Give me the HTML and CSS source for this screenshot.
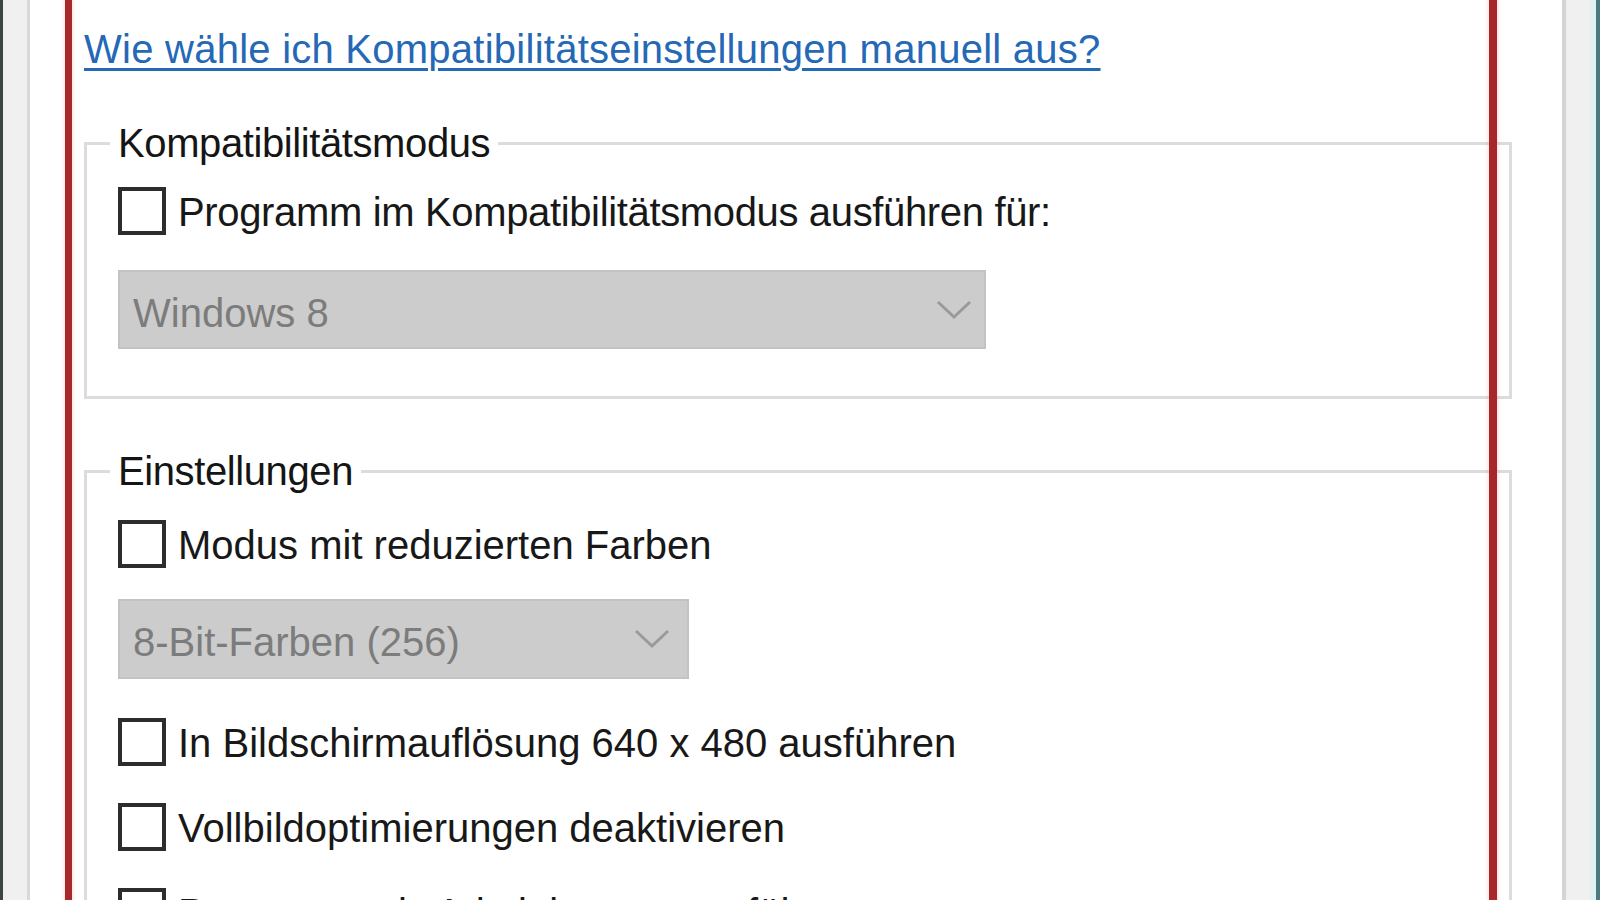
FILE: index.html
```html
<!DOCTYPE html>
<html lang="de">
<head>
  <meta charset="UTF-8" />
  <meta name="viewport" content="width=device-width, initial-scale=1.0" />
  <title>Kompatibilität</title>
  <link rel="stylesheet" href="styles.css">
</head>
<body>
  <div class="frame">
    <main class="page">
      <a class="help-link" href="#">Wie wähle ich Kompatibilitätseinstellungen manuell aus?</a>

      <fieldset class="group group-compat">
        <legend>Kompatibilitätsmodus</legend>
        <label class="option">
          <input type="checkbox" />
          <span>Programm im Kompatibilitätsmodus ausführen für:</span>
        </label>
        <div class="dropdown dropdown-wide">
          <span>Windows 8</span>
          <svg class="chevron" viewBox="0 0 36 20" width="36" height="20"><polyline points="2,2 18,17 34,2" /></svg>
        </div>
      </fieldset>

      <fieldset class="group group-settings">
        <legend>Einstellungen</legend>
        <label class="option">
          <input type="checkbox" />
          <span>Modus mit reduzierten Farben</span>
        </label>
        <div class="dropdown dropdown-narrow">
          <span>8-Bit-Farben (256)</span>
          <svg class="chevron" viewBox="0 0 36 20" width="36" height="20"><polyline points="2,2 18,17 34,2" /></svg>
        </div>
        <label class="option">
          <input type="checkbox" />
          <span>In Bildschirmauflösung 640 x 480 ausführen</span>
        </label>
        <label class="option">
          <input type="checkbox" />
          <span>Vollbildoptimierungen deaktivieren</span>
        </label>
        <label class="option">
          <input type="checkbox" />
          <span>Programm als Administrator ausführen</span>
        </label>
      </fieldset>

      <div class="highlight"></div>
    </main>
  </div>
</body>
</html>
```

FILE: styles.css
```css
html, body {
  height: 900px;
}
body {
  margin: 0;
  overflow: hidden;
  border-left: 3px solid #3b4543;
  border-right: 4px solid #4d7980;
  background-color: #f0f0f0;
  font-family: 'Liberation Sans', Arial, sans-serif;
  color: #181818;
}
.frame {
  height: 900px;
  padding: 0 24px;
  border-right: 6px solid #e2f1f3;
  box-sizing: border-box;
}
.page {
  position: relative;
  height: 900px;
  box-sizing: border-box;
  padding: 26px 50px 0 54px;
  background-color: #ffffff;
  border-left: 3px solid #d9d9d9;
  border-right: 4px solid #d4d4d4;
}
.help-link {
  display: block;
  width: fit-content;
  font-size: 40px;
  line-height: 46px;
  letter-spacing: 0.25px;
  color: #2468b6;
  text-decoration: underline;
  text-decoration-thickness: 3px;
  text-underline-offset: 5px;
}
.group {
  margin: 48px 0 0;
  padding: 0 0 47px 31px;
  border: 3px solid #dcdcdc;
  min-width: 0;
}
.group-settings {
  margin-top: 49px;
}
.group legend {
  margin-left: -8px;
  padding: 0 8px;
  font-size: 40px;
  line-height: 46px;
  letter-spacing: -0.4px;
  color: #151515;
}
.option {
  display: flex;
  align-items: flex-start;
  gap: 12px;
  height: 48px;
  margin-top: 37px;
  font-size: 40px;
  line-height: 48px;
}
.option span {
  padding-top: 1px;
}
.group-compat .option span {
  letter-spacing: -0.35px;
}
.group-compat .option:first-of-type {
  margin-top: 21px;
}
.group-settings .option:first-of-type {
  margin-top: 26px;
}
.dropdown + .option {
  margin-top: 39px;
}
.option input {
  appearance: none;
  -webkit-appearance: none;
  flex: none;
  width: 48px;
  height: 48px;
  margin: 0;
  border: 4px solid #2d2d2d;
  background-color: #ffffff;
  box-sizing: border-box;
}
.dropdown {
  display: flex;
  align-items: center;
  justify-content: space-between;
  height: 79px;
  margin-top: 31px;
  padding: 0 12px 0 13px;
  box-sizing: border-box;
  background-color: #cccccc;
  border: 2px solid #c3c3c3;
  font-size: 40px;
  line-height: 46px;
  color: #7c7c7c;
}
.dropdown span {
  padding-top: 6px;
}
.group-compat .dropdown {
  margin-top: 35px;
}
.dropdown-wide {
  width: 868px;
}
.dropdown-narrow {
  width: 571px;
  height: 80px;
  padding-right: 17px;
}
.chevron polyline {
  fill: none;
  stroke: #9a9a9a;
  stroke-width: 3;
}
.highlight {
  position: absolute;
  top: -20px;
  bottom: -20px;
  left: 35px;
  right: 65px;
  border: 7px solid #a6282a;
  border-right-width: 8px;
  box-shadow: 0 0 4px rgba(255, 90, 90, 0.35), inset 0 0 4px rgba(255, 90, 90, 0.35);
  pointer-events: none;
}
```
